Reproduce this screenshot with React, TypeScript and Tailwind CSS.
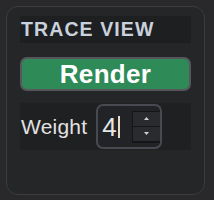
export default function App() {
  return (
    <div className="w-[214px] h-[200px] bg-[#29292b] pt-[6px] pl-[6px] overflow-hidden" style={{ fontFamily: '"Liberation Sans", Arial, sans-serif' }}>
      <div className="w-[199px] h-[189px] rounded-[12px] border border-[#3b3c3f] bg-[#252628] px-[13px] pt-[9px]">
        <div className="h-[27px] bg-[#1e1f21] flex items-center pl-[1px]">
          <span className="text-[19.5px] leading-none font-bold tracking-[1.1px] text-[#c8d1dc]">TRACE VIEW</span>
        </div>
        <div className="mt-[14px] h-[34px] rounded-[7px] border-2 border-[#56575c] bg-[#2e8b57] flex items-center justify-center">
          <span className="text-[26px] leading-none font-bold text-white tracking-[0.3px]">Render</span>
        </div>
        <div className="mt-[12px] h-[47px] bg-[#1f2022] flex items-center pl-[1px]">
          <span className="text-[21px] leading-none text-[#e2e2e2] tracking-[0.2px]">Weight</span>
          <div className="ml-[9px] w-[66px] h-[45px] rounded-[7px] border-2 border-[#474a50] bg-[#222326] flex items-center pl-[4px]">
            <span className="text-[26px] leading-none text-[#e6e6e6]">4</span>
            <span className="ml-[1px] w-[2px] h-[22px] bg-[#e5dccb]" />
            <div className="ml-[12px] w-[28px] h-[32px] flex flex-col">
              <div className="h-[16px] bg-[#2a2b2e] border-t border-l border-[#141517] border-b flex items-center justify-center">
                <svg width="5" height="3" viewBox="0 0 5 3"><path d="M2.5 0 L5 3 L0 3 Z" fill="#d0d0d0" /></svg>
              </div>
              <div className="h-[16px] bg-[#2a2b2e] border-l border-b-2 border-[#141517] flex items-center justify-center">
                <svg width="5" height="3" viewBox="0 0 5 3"><path d="M0 0 L5 0 L2.5 3 Z" fill="#d0d0d0" /></svg>
              </div>
            </div>
          </div>
        </div>
      </div>
    </div>
  );
}
